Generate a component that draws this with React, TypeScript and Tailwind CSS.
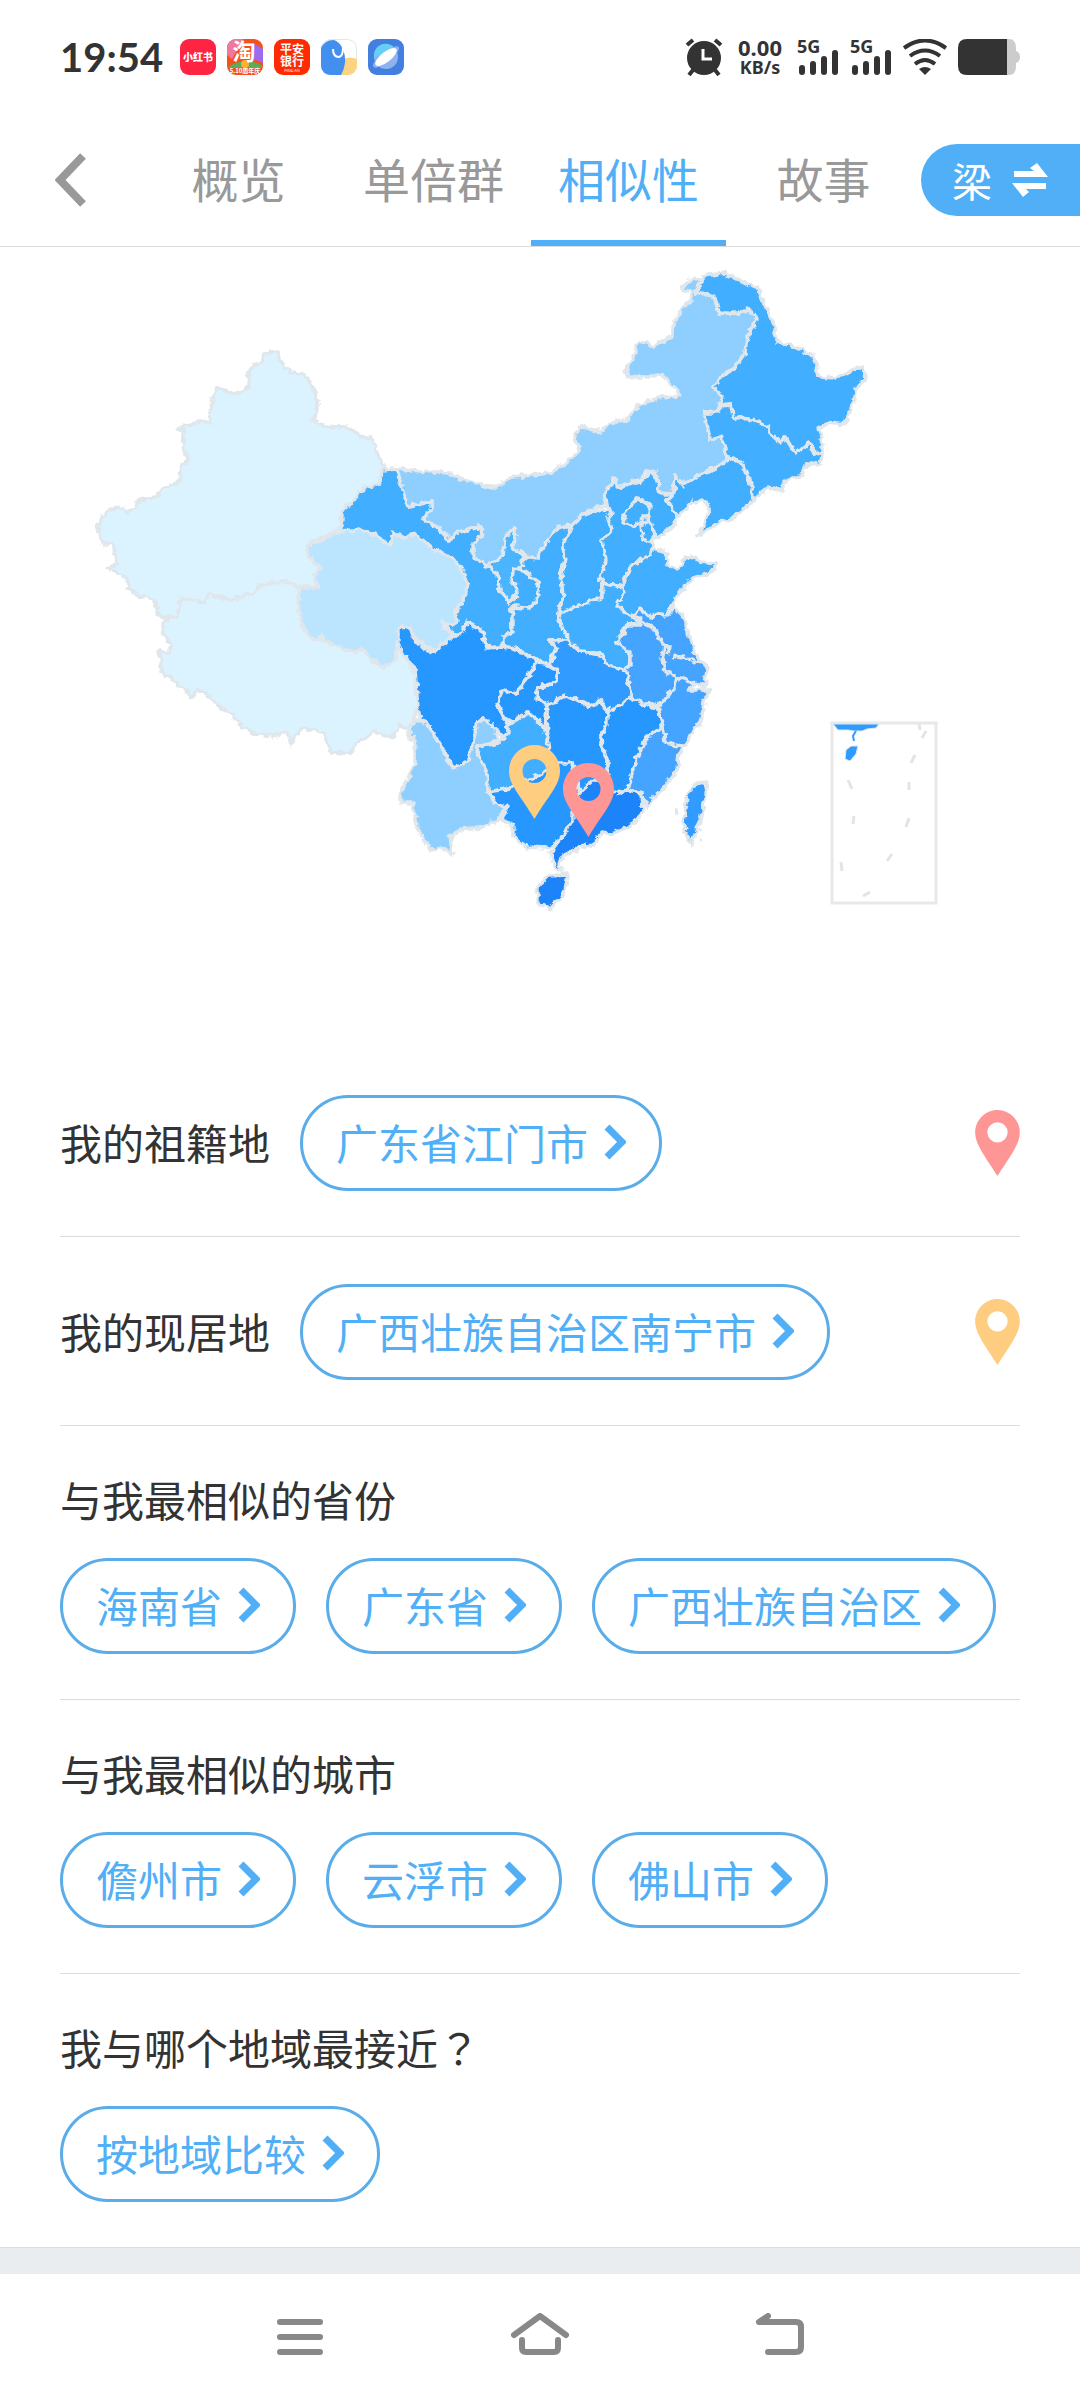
import { useState } from 'react';
import type { ReactNode } from 'react';

const tabs = ['概览', '单倍群', '相似性', '故事'];

// Drawn in order: later provinces cover the rough edges of earlier ones.
const provinces = [
  { name: '新疆', fill: '#daf3ff', points: '263,353 278,352 279,360 290,371 304,375 310,382 317,397 317,410 313,420 323,426 347,427 363,437 373,440 377,455 385,466 380,483 363,488 352,503 342,510 342,530 313,541 307,547 310,557 321,570 313,576 319,587 300,587 283,581 260,586 253,593 230,600 210,595 203,602 182,599 177,616 164,618 157,613 154,599 140,596 128,588 127,578 115,572 107,568 117,565 113,543 102,543 98,528 103,515 114,508 123,507 126,512 135,508 139,499 155,497 162,490 180,481 181,467 188,460 183,447 184,431 177,428 200,422 211,423 208,417 217,387 227,392 239,393 249,387 249,371 253,365 263,362' },
  { name: '西藏', fill: '#daf3ff', points: '182,599 203,602 210,595 230,600 253,593 260,586 283,581 300,587 298,603 303,627 313,640 322,637 333,646 357,652 363,649 373,658 382,667 395,660 399,648 408,657 415,673 418,707 413,720 408,728 399,725 393,738 375,731 355,745 351,752 332,753 324,734 307,728 298,732 291,745 288,732 272,736 255,733 242,727 228,711 223,710 203,691 195,691 193,697 170,678 162,672 162,660 158,651 168,653 172,647 163,633 163,622 177,616' },
  { name: '内蒙古', fill: '#8ecfff', points: '397,469 420,471 450,473 455,477 477,484 493,488 513,477 550,473 563,465 580,451 574,438 580,426 600,432 615,421 627,420 638,405 660,397 680,396 675,387 662,374 647,377 628,377 625,371 631,362 639,341 655,346 672,336 672,328 682,308 691,300 691,292 681,288 693,278 703,280 695,292 707,294 715,298 719,313 740,313 747,308 757,319 747,338 745,353 735,367 712,386 723,397 720,405 717,412 703,412 707,423 710,440 721,436 727,457 725,462 705,472 683,485 675,475 671,493 660,492 655,472 645,472 640,478 617,488 616,478 607,488 605,505 583,513 573,525 557,528 540,552 538,559 530,558 520,552 511,548 517,535 513,528 505,537 503,557 485,565 473,555 473,543 483,535 480,527 455,533 450,541 438,528 423,518 432,508 432,501 408,507 402,490' },
  { name: '甘肃', fill: '#43aeff', points: '382,470 397,469 402,490 408,507 432,501 432,508 423,518 438,528 450,541 455,533 480,527 483,535 473,543 473,555 485,565 497,573 499,590 510,602 517,595 516,587 512,582 513,568 521,569 539,582 537,602 528,608 512,607 512,632 503,637 502,647 485,648 483,633 467,621 460,637 450,632 440,600 400,560 342,531 342,510 352,503 363,488 380,483' },
  { name: '青海', fill: '#bbe4ff', points: '307,546 342,531 360,529 372,533 391,546 392,532 405,538 415,534 433,548 455,560 463,572 468,587 462,602 455,613 457,622 452,625 442,621 443,627 453,633 447,640 437,652 427,647 417,640 409,628 399,628 403,633 399,647 393,662 382,667 372,660 363,649 357,652 333,646 322,637 313,640 303,627 298,603 300,587 319,587 313,576 321,570 310,557' },
  { name: '宁夏', fill: '#4cb4ff', points: '485,565 503,557 505,537 513,528 517,535 511,548 520,552 523,557 521,569 513,568 512,582 516,587 517,595 510,602 499,590 497,573' },
  { name: '陕西', fill: '#43aeff', points: '523,557 530,558 538,559 540,552 557,528 571,525 563,547 565,560 561,573 563,597 558,613 567,630 568,640 548,640 557,647 550,657 550,667 533,658 517,650 503,645 503,637 512,632 512,607 528,608 537,602 539,582 521,569' },
  { name: '山西', fill: '#43aeff', points: '572,525 583,515 607,509 612,512 608,518 611,530 602,540 606,560 600,578 602,583 602,597 580,605 558,614 563,597 561,573 565,560 563,547' },
  { name: '河北', fill: '#43aeff', points: '608,508 605,493 615,478 617,488 640,482 653,470 661,493 671,493 667,500 678,517 673,527 662,534 652,540 653,548 650,555 630,567 622,587 602,583 600,578 606,560 602,540 611,530 608,518 612,512' },
  { name: '北京', fill: '#43aeff', points: '638,498 650,505 649,513 643,523 632,526 623,523 624,516 628,510' },
  { name: '天津', fill: '#43aeff', points: '643,523 641,517 648,517 653,528 655,536 652,542 642,538 640,528' },
  { name: '黑龙江', fill: '#43aeff', points: '703,276 725,273 743,282 757,288 767,310 773,323 777,342 797,347 815,358 818,377 838,378 853,370 864,367 866,378 858,385 854,400 845,424 829,422 819,429 822,443 822,455 813,452 810,443 795,453 785,437 780,443 772,435 768,427 753,420 733,417 731,404 720,405 723,397 712,386 735,367 745,353 747,338 757,319 747,308 740,313 719,313 715,298 707,294 695,292 703,284' },
  { name: '吉林', fill: '#43aeff', points: '703,412 717,412 720,405 731,404 733,417 753,420 768,427 772,435 780,443 785,437 795,453 810,443 813,452 822,455 820,465 812,463 807,463 802,475 783,482 783,490 768,487 753,501 752,487 742,463 727,457 721,436 710,440 707,423' },
  { name: '辽宁', fill: '#43aeff', points: '727,457 742,463 752,487 753,501 733,518 715,525 707,530 697,536 703,527 710,508 703,500 693,502 677,517 667,500 674,493 675,475 683,485 705,472 725,462' },
  { name: '山东', fill: '#43aeff', points: '653,548 667,552 668,565 675,568 682,565 685,558 692,557 700,562 717,564 710,573 690,580 682,590 673,602 667,615 658,614 650,617 640,608 635,615 625,613 617,605 623,595 622,587 630,567 650,555' },
  { name: '河南', fill: '#43aeff', points: '602,583 602,597 580,605 558,614 562,627 570,642 582,653 602,655 605,663 622,671 630,665 630,652 617,643 627,625 640,625 635,617 625,613 617,605 623,595 622,587' },
  { name: '江苏', fill: '#45a4ff', points: '635,615 640,609 650,617 658,614 667,615 673,605 685,620 688,636 693,647 698,658 707,667 705,687 687,680 677,677 665,672 662,660 665,647 655,630' },
  { name: '安徽', fill: '#45a4ff', points: '637,618 655,630 665,647 662,660 665,672 677,677 675,687 668,695 658,707 643,703 632,698 628,680 623,671 630,665 630,652 617,643 627,625 640,625' },
  { name: '浙江', fill: '#45a4ff', points: '677,677 687,680 695,684 688,690 711,690 704,700 703,710 700,723 692,732 687,743 680,747 665,742 663,727 657,710 668,695 675,687' },
  { name: '湖北', fill: '#309bff', points: '568,640 580,652 602,655 605,663 627,672 632,698 607,712 600,700 590,707 577,700 565,696 547,705 537,700 537,688 557,682 557,670 550,665 557,647 548,640' },
  { name: '重庆', fill: '#2897ff', points: '550,667 557,670 557,682 537,688 537,700 547,705 545,730 536,718 527,713 513,723 503,717 497,703 503,690 517,693 525,680 537,662 545,663' },
  { name: '四川', fill: '#2897ff', points: '398,627 410,628 413,637 423,648 435,652 447,640 462,633 467,622 483,633 487,648 503,647 517,650 537,660 534,668 525,680 517,693 503,690 497,703 503,717 508,725 508,733 503,737 495,728 485,720 477,720 474,740 467,763 453,768 440,745 427,723 420,720 418,707 415,670 402,652 398,643' },
  { name: '贵州', fill: '#43aeff', points: '498,743 508,733 508,725 513,723 527,713 536,718 545,730 548,745 560,763 527,785 510,788 488,792 487,773 477,753 478,747' },
  { name: '湖南', fill: '#2897ff', points: '547,705 565,696 577,700 590,707 600,700 607,712 607,723 600,740 607,760 607,780 593,780 580,793 572,763 562,765 550,760 548,745' },
  { name: '江西', fill: '#2897ff', points: '607,712 632,698 643,703 658,707 663,730 647,737 637,757 628,790 613,793 607,780 607,760 600,740 607,723' },
  { name: '福建', fill: '#45a4ff', points: '663,727 665,742 680,747 687,743 679,753 677,770 667,783 655,797 647,807 642,793 628,790 637,757 647,737' },
  { name: '云南', fill: '#8ecfff', points: '415,720 427,723 440,745 453,768 467,763 474,740 477,720 485,720 495,728 498,741 478,747 477,753 487,773 488,792 495,803 507,807 498,820 480,828 460,830 450,837 452,855 443,848 430,850 423,838 417,827 413,803 400,803 400,794 407,780 415,763 415,740 408,735' },
  { name: '广西', fill: '#2897ff', points: '488,792 510,788 527,780 543,773 555,763 572,763 573,780 580,793 573,820 562,840 547,848 527,847 513,837 513,825 502,820 507,807 495,803' },
  { name: '广东', fill: '#1a84f8', points: '593,780 607,780 613,793 628,790 642,793 643,812 633,824 613,834 602,832 593,845 580,847 569,853 561,858 559,864 562,871 555,869 551,853 560,840 573,820 573,807 580,793' },
  { name: '海南', fill: '#1a84f8', points: '538,887 549,876 568,875 565,889 560,898 549,909 538,902' },
  { name: '台湾', fill: '#309bff', points: '688,793 697,783 707,782 704,800 700,822 694,836 692,846 684,829 685,808' },
];

// Dashed sea line, in the coordinates of the inset frame
const dashes = [
  '919,724 920,730', '926,731 922,738', '915,755 911,763', '909,782 909,790', '909,818 906,827',
  '892,854 887,861', '870,892 863,896', '841,862 842,871', '854,816 853,824', '848,780 852,789',
];

const pinPath = 'M22 0C34 0 44 10 44 22C44 34 34 46 22 65C10 46 0 34 0 22C0 10 10 0 22 0ZM22 12A10 10 0 1 0 22 32A10 10 0 1 0 22 12Z';

const Pin = ({ color }: { color: string }) => (
  <svg viewBox="0 0 44 65" className="w-[45px] h-[66px] shrink-0" fill={color} fillRule="evenodd">
    <path d={pinPath} />
  </svg>
);

const ChinaMap = () => (
  <svg viewBox="0 247 1080 801" className="block w-full h-auto" role="img" aria-label="相似性地图">
    <defs>
      <filter id="coast" x="0" y="0" width="1" height="1">
        <feTurbulence type="fractalNoise" baseFrequency="0.16" numOctaves="2" seed="4" result="noise" />
        <feDisplacementMap in="SourceGraphic" in2="noise" scale="7" xChannelSelector="R" yChannelSelector="G" />
      </filter>
    </defs>
    <g filter="url(#coast)">
      <rect x="60" y="247" width="860" height="801" fill="none" />
      <g stroke="#dfe6ec" strokeWidth="3.4" strokeLinejoin="round">
        {provinces.map((p) => (
          <polygon key={p.name} points={p.points} fill={p.fill} />
        ))}
        <path d="M673 655l14 3 8 4 10 1M664 645l6 4 -3 5M644 522l5 -2 -1 -4M641 703l4 4" fill="none" />
        <path d="M675 812l4 -2M701 829v2M700 840h2" fill="none" />
      </g>
    </g>
    <rect x="832" y="723" width="104" height="180" fill="none" stroke="#e8e8e8" strokeWidth="3" />
    <g stroke="#e0e7ec" strokeWidth="1">
      <path d="M833 724h46l-3 4 -9 1 -5 2 -8 0 -6 -1 -10 0z" fill="#309bff" />
      <path d="M856 731l-3 5 1 5" fill="none" stroke="#309bff" strokeWidth="2" />
      <path d="M846 750l5 -4 7 0 -2 8 -6 7 -5 -2z" fill="#309bff" />
    </g>
    <g stroke="#e4e4e6" strokeWidth="3">
      {dashes.map((d) => (
        <polyline key={d} points={d} />
      ))}
    </g>
    <g fillRule="evenodd">
      <path d="M534.500 745C549 745 560 757 560 771C560 785 548 796 534.500 819C521 796 509 785 509 771C509 757 520 745 534.500 745ZM534.500 759A12 12 0 1 0 534.500 783A12 12 0 1 0 534.500 759Z" fill="#ffcd80" />
      <path d="M588.500 763C603 763 614 775 614 789C614 803 602 814 588.500 837C575 814 563 803 563 789C563 775 574 763 588.500 763ZM588.500 777A12 12 0 1 0 588.500 801A12 12 0 1 0 588.500 777Z" fill="#ff9696" />
    </g>
  </svg>
);

const Chip = ({ label }: { label: string }) => (
  <button
    type="button"
    className="flex items-center gap-4 h-24 px-[33px] pb-[2px] border-3 border-[#5aade9] rounded-full text-[42px] leading-none whitespace-nowrap text-[#50aff6]"
  >
    {label}
    <svg viewBox="0 0 22 36" className="w-[22px] h-9" fill="none" stroke="currentColor" strokeWidth="7">
      <path d="M3 3L18 18L3 33" />
    </svg>
  </button>
);

const PlaceRow = ({ title, place, pin }: { title: string; place: string; pin: string }) => (
  <div className="flex items-center border-b border-[#dcdcdc] pt-[47px] pb-[45px]">
    <h2 className="w-[240px] pb-[2px] text-[42px] leading-none">{title}</h2>
    <Chip label={place} />
    <div className="ml-auto">
      <Pin color={pin} />
    </div>
  </div>
);

const ChipSection = ({ title, items }: { title: ReactNode; items: string[] }) => (
  <section className="border-b border-[#dcdcdc] last:border-b-0 pt-[42px] pb-[45px]">
    <h2 className="mb-7 text-[42px] leading-[62px]">{title}</h2>
    <div className="flex flex-wrap gap-[30px]">
      {items.map((item) => (
        <Chip key={item} label={item} />
      ))}
    </div>
  </section>
);

const Signal = () => (
  <svg viewBox="0 0 42 36" className="w-[42px] h-9 overflow-visible" fill="#333">
    <text x="0" y="14" fontSize="18" fontWeight="700" fontFamily="Noto Sans">5G</text>
    <rect x="2" y="26" width="6" height="10" rx="3" />
    <rect x="13" y="22" width="6" height="14" rx="3" />
    <rect x="24" y="17" width="6" height="19" rx="3" />
    <rect x="35" y="11" width="6" height="25" rx="3" />
  </svg>
);

const StatusBar = () => (
  <div className="flex items-center h-[113px] pl-[60px] pr-[60px] text-[#333]">
    <span className="w-[120px] font-[Lato] font-bold text-[40px] leading-none">19:54</span>
    <div className="flex gap-[11px]">
      <svg viewBox="0 0 36 36" className="size-9">
        <rect width="36" height="36" rx="9" fill="#fe2442" />
        <text x="18" y="22" textAnchor="middle" fontSize="10" fontWeight="900" fill="#fff">小红书</text>
      </svg>
      <svg viewBox="0 0 36 36" className="size-9 overflow-visible">
        <rect width="36" height="36" rx="9" fill="#f5501e" />
        <path d="M0 16V9A9 9 0 0 1 9 0H16L5 20Z" fill="#ee78a0" />
        <path d="M26 4L36 10V24L27 20Z" fill="#9b6cf0" />
        <path d="M2 27Q18 18 35 26V29H2Z" fill="#5fa95a" />
        <circle cx="18" cy="25" r="4" fill="#ffb428" />
        <text x="17" y="21" textAnchor="middle" fontSize="23" fontWeight="700" fill="#fff">淘</text>
        <text x="18" y="34" textAnchor="middle" fontSize="6" fontWeight="700" fill="#fff">5.10周年庆</text>
      </svg>
      <svg viewBox="0 0 36 36" className="size-9">
        <rect width="36" height="36" rx="9" fill="#fe2b00" />
        <text x="18" y="15" textAnchor="middle" fontSize="12" fontWeight="700" fill="#fff">平安</text>
        <text x="18" y="27" textAnchor="middle" fontSize="12" fontWeight="700" fill="#fff">银行</text>
        <text x="18" y="33" textAnchor="middle" fontSize="4" fill="#fff">PING AN</text>
      </svg>
      <svg viewBox="0 0 36 36" className="size-9">
        <rect x="0.500" y="0.500" width="35" height="35" rx="9" fill="#fff" stroke="#e3e6e8" />
        <path d="M23 20Q29 17 36 20V27A9 9 0 0 1 27 36H19Z" fill="#fcd481" />
        <path d="M0 9Q4 1 12 1C20 2 25 14 24 24Q23 31 20 36H9A9 9 0 0 1 0 27Z" fill="#438ff0" />
        <path d="M12 10Q12 18 18 18Q22 17 22 9" fill="none" stroke="#fff" strokeWidth="2" />
      </svg>
      <svg viewBox="0 0 36 36" className="size-9">
        <rect width="36" height="36" rx="9" fill="#437fdf" />
        <circle cx="18" cy="18" r="12" fill="#8eb2ef" />
        <path d="M6 19A12 12 0 0 1 27 9Z" fill="#65d0f5" />
        <ellipse cx="18" cy="18" rx="16" ry="5" transform="rotate(-38 18 18)" fill="#8eb2ef" />
        <ellipse cx="18" cy="18" rx="13" ry="5" transform="rotate(-38 18 18)" fill="#fff" />
      </svg>
    </div>
    <div className="flex items-center gap-[11px] ml-auto">
      <svg viewBox="0 0 38 38" className="w-[38px] h-[38px]">
        <path d="M8 32L4 37M30 32L34 37M2 7L8 2M36 7L30 2" stroke="#333" strokeWidth="4" />
        <circle cx="19" cy="20" r="17" fill="#333" />
        <path d="M18 11V21H27" fill="none" stroke="#fff" strokeWidth="3" />
      </svg>
      <div className="w-[52px] text-center font-['Noto_Sans'] font-bold">
        <div className="text-[22px] leading-5">0.00</div>
        <div className="text-[18px] leading-5">KB/s</div>
      </div>
      <Signal />
      <Signal />
      <svg viewBox="0 0 44 36" className="w-11 h-9" fill="none" stroke="#333" strokeWidth="4">
        <path d="M1 9Q22 -6 43 9M7 17Q22 6 37 17M12 25Q22 17 32 25" />
        <path d="M16 30Q22 26 28 30L22 36Z" fill="#333" stroke="none" />
      </svg>
      <svg viewBox="0 0 62 36" className="w-[62px] h-9">
        <path d="M49 0H51Q58 0 58 9V12Q62 13 62 18Q62 23 58 24V27Q58 36 51 36H49Z" fill="#ccc" />
        <path d="M49 0V36H9Q0 36 0 27V9Q0 0 9 0Z" fill="#333" />
      </svg>
    </div>
  </div>
);

const App = () => {
  const [active, setActive] = useState('相似性');

  return (
    <div className="min-h-screen flex flex-col bg-white text-[#333] font-['Noto_Sans_CJK_SC',sans-serif]">
      <StatusBar />
      <header className="flex items-center h-[134px] border-b border-[#dcdcdc]">
        <button type="button" aria-label="返回" className="w-[141px] pl-[55px]">
          <svg viewBox="0 0 32 54" className="w-8 h-[54px]" fill="none" stroke="#999" strokeWidth="8">
            <path d="M28 3L5 27L28 51" />
          </svg>
        </button>
        <nav className="flex-1 grid grid-cols-4 h-full">
          {tabs.map((tab) => (
            <button
              key={tab}
              type="button"
              onClick={() => setActive(tab)}
              className={`pb-1 border-y-6 border-transparent text-[47px] leading-none whitespace-nowrap ${
                tab === active ? 'border-b-[#50aff6] text-[#50aff6]' : 'text-[#999]'
              }`}
            >
              {tab}
            </button>
          ))}
        </nav>
        <button
          type="button"
          className="flex items-center gap-5 w-[159px] h-[72px] pl-[31px] rounded-l-full bg-[#50aff6] text-white text-[40px] leading-none"
        >
          梁
          <svg viewBox="0 0 36 34" className="w-9 h-[34px]" fill="#fff">
            <path d="M2 8H22L18 5L25 0L36 14H2Z" />
            <path d="M34 20H0L11 34L17 29L14 26H34Z" />
          </svg>
        </button>
      </header>

      <main>
        <ChinaMap />
        <div className="px-[60px]">
          <PlaceRow title="我的祖籍地" place="广东省江门市" pin="#ff9696" />
          <PlaceRow title="我的现居地" place="广西壮族自治区南宁市" pin="#ffcd80" />
          <ChipSection title="与我最相似的省份" items={['海南省', '广东省', '广西壮族自治区']} />
          <ChipSection title="与我最相似的城市" items={['儋州市', '云浮市', '佛山市']} />
          <ChipSection
            title={<>我与哪个地域最接近<span className="font-['Noto_Sans_CJK_TC',sans-serif]" lang="zh-TW">？</span></>}
            items={['按地域比较']}
          />
        </div>
        <div className="h-[27px] border-t border-[#d8dee1] bg-[#e9edf0]" />
      </main>

      <footer className="flex-1 grid grid-cols-3 items-center px-[180px] min-h-[126px]">
        <button type="button" aria-label="菜单" className="flex justify-center">
          <svg viewBox="0 0 60 48" className="w-[60px] h-12" fill="none" stroke="#888" strokeWidth="6" strokeLinecap="round">
            <path d="M10 9H50M10 24H50M10 39H50" />
          </svg>
        </button>
        <button type="button" aria-label="主页" className="flex justify-center">
          <svg viewBox="0 0 60 48" className="w-[60px] h-12" fill="none" stroke="#888" strokeWidth="6" strokeLinecap="round" strokeLinejoin="round">
            <path d="M4 22L30 3L56 22M12 27V35Q12 39 16 39H44Q48 39 48 35V27" />
          </svg>
        </button>
        <button type="button" aria-label="后退" className="flex justify-center">
          <svg viewBox="0 0 60 48" className="w-[60px] h-12" fill="none" stroke="#888" strokeWidth="6" strokeLinecap="round" strokeLinejoin="round">
            <path d="M18 3L9 9H46Q51 9 51 14V34Q51 39 46 39H18" />
            <path d="M9 9L18 2V9Z" fill="#888" stroke="none" />
          </svg>
        </button>
      </footer>
    </div>
  );
};

export default App;
